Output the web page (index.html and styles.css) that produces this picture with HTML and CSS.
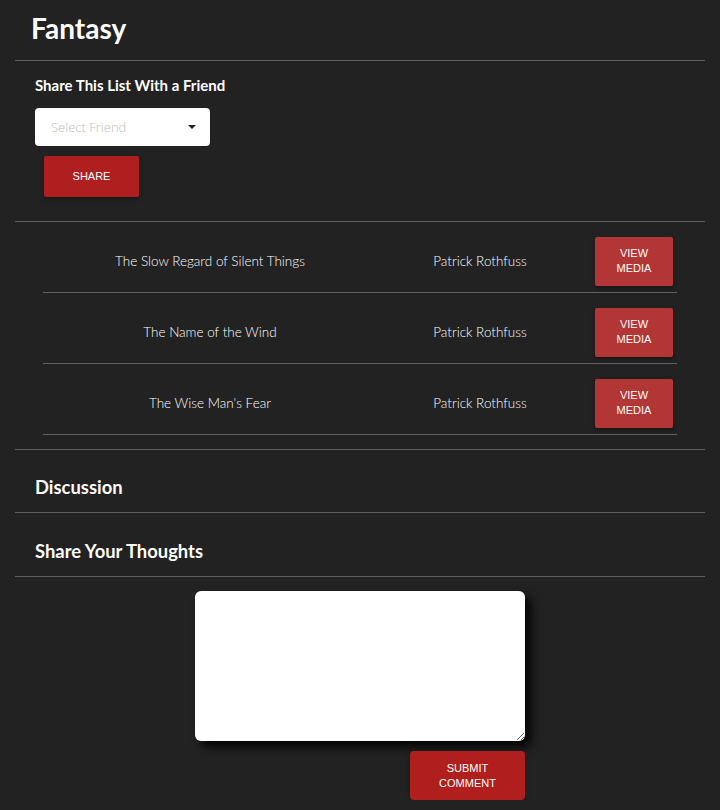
FILE: index.html
```html
<!DOCTYPE html>
<html>
<head>
<meta charset="utf-8">
<link rel="stylesheet" href="styles.css">
</head>
<body>
<div class="page">
  <h1 class="title">Fantasy</h1>
  <section class="share">
    <h2 class="sub">Share This List With a Friend</h2>
    <div class="select">
      <span class="placeholder">Select Friend</span>
      <span class="caret"></span>
    </div>
    <button class="btn share-btn">SHARE</button>
  </section>
  <section class="list">
    <div class="row">
      <div class="cell book">The Slow Regard of Silent Things</div>
      <div class="cell author">Patrick Rothfuss</div>
      <div class="cell action"><button class="btn media-btn">VIEW<br>MEDIA</button></div>
    </div>
    <div class="row">
      <div class="cell book">The Name of the Wind</div>
      <div class="cell author">Patrick Rothfuss</div>
      <div class="cell action"><button class="btn media-btn">VIEW<br>MEDIA</button></div>
    </div>
    <div class="row">
      <div class="cell book">The Wise Man's Fear</div>
      <div class="cell author">Patrick Rothfuss</div>
      <div class="cell action"><button class="btn media-btn">VIEW<br>MEDIA</button></div>
    </div>
  </section>
  <h3 class="section-title">Discussion</h3>
  <h3 class="section-title">Share Your Thoughts</h3>
  <section class="comment">
    <textarea class="textarea"></textarea>
    <button class="btn submit-btn">SUBMIT<br>COMMENT</button>
  </section>
</div>
</body>
</html>
```
FILE: styles.css
```css
html, body {
  margin: 0;
  padding: 0;
  background: #222222;
}
body {
  font-family: Lato, "Liberation Sans", sans-serif;
  color: #ffffff;
}
.page {
  width: 690px;
  margin: 0 15px;
}
.title {
  margin: 0;
  padding: 11px 0 0 16px;
  height: 61px;
  box-sizing: border-box;
  font-size: 28px;
  font-weight: 700;
  line-height: 34px;
  border-bottom: 1px solid #5f5f5f;
}
.share {
  padding: 15px 20px 24px;
  border-bottom: 1px solid #5f5f5f;
}
.sub {
  margin: 0;
  font-size: 15px;
  font-weight: 700;
  line-height: 18px;
}
.select {
  margin-top: 14px;
  width: 175px;
  height: 38px;
  box-sizing: border-box;
  background: #fff;
  border-radius: 4px;
  display: flex;
  align-items: center;
  justify-content: space-between;
  padding: 0 14px 0 16px;
}
.placeholder {
  font-family: "Open Sans", Lato, sans-serif;
  font-weight: 300;
  font-size: 13px;
  color: #bdbdbd;
}
.caret {
  width: 0;
  height: 0;
  border-left: 4px solid transparent;
  border-right: 4px solid transparent;
  border-top: 4px solid #222;
}
.btn {
  border: none;
  color: #fff;
  font-family: "Liberation Sans", Arial, sans-serif;
  font-size: 11px;
  line-height: 15px;
  border-radius: 2px;
  box-shadow: 0 2px 4px rgba(0,0,0,0.35);
  padding: 0;
  cursor: pointer;
}
.share-btn {
  display: block;
  margin: 10px 0 0 9px;
  width: 95px;
  height: 41px;
  background: #b01f1f;
}
.list {
  padding: 0 28px 14px;
  border-bottom: 1px solid #5f5f5f;
}
.row {
  display: grid;
  grid-template-columns: 334px 206px 1fr;
  height: 71px;
  padding-top: 8px;
  box-sizing: border-box;
  border-bottom: 1px solid #5f5f5f;
  align-items: center;
}
.cell {
  font-family: Lato, "Open Sans", sans-serif;
  font-weight: 300;
  font-size: 13.5px;
  text-align: center;
  color: #ffffff;
}
.action {
  display: flex;
  justify-content: flex-end;
  padding-right: 4px;
}
.media-btn {
  width: 78px;
  height: 49px;
  background: #b33636;
}
.section-title {
  margin: 0;
  height: 63px;
  box-sizing: border-box;
  padding: 12px 20px 0;
  display: flex;
  align-items: center;
  font-size: 18.4px;
  font-weight: 700;
  border-bottom: 1px solid #5f5f5f;
}
.section-title + .section-title {
  height: 64px;
}
.comment {
  display: flex;
  flex-direction: column;
  align-items: flex-end;
  width: 330px;
  margin: 14px auto 0;
}
.textarea {
  display: block;
  width: 330px;
  height: 150px;
  box-sizing: border-box;
  border: none;
  border-radius: 6px;
  background: #fff;
  box-shadow: 6px 6px 10px rgba(0,0,0,0.9);
  resize: both;
  outline: none;
}
.submit-btn {
  margin-top: 10px;
  width: 115px;
  height: 49px;
  background: #b01e1e;
  border-radius: 4px;
}
```
